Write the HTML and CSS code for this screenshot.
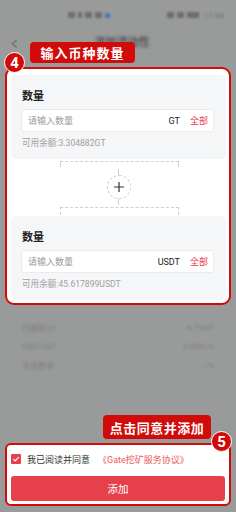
FILE: index.html
```html
<!DOCTYPE html>
<html lang="zh">
<head>
<meta charset="utf-8">
<title>添加流动性</title>
<link rel="stylesheet" href="styles.css">
</head>
<body>
<div class="screen">
  <div class="status">
    <span class="st-left"><i class="ic"></i><i class="ic sm"></i><i class="ic"></i><i class="ic"></i><i class="dot"></i></span>
    <span class="st-right"><i class="ic"></i><i class="ic"></i><i class="ic wide"></i><span class="time">11:43</span></span>
  </div>
  <div class="header">
    <span class="back">‹</span>
    <span class="title">添加流动性</span>
    <span></span>
  </div>

  <div class="card card-top">
    <div class="tag tag-1">输入币种数量</div>
    <div class="badge badge-4">4</div>

    <div class="panel">
      <div class="label">数量</div>
      <div class="field">
        <span class="ph">请输入数量</span>
        <span class="unit">GT</span>
        <span class="all">全部</span>
      </div>
      <div class="balance">可用余额:3.304882GT</div>
    </div>

    <div class="connector">
      <div class="bracket bracket-a"></div>
      <div class="vline"></div>
      <div class="plus">
        <svg width="12" height="12" viewBox="0 0 12 12"><path d="M6 1v10M1 6h10" stroke="#333" stroke-width="1.2" fill="none"/></svg>
      </div>
      <div class="vline"></div>
      <div class="bracket bracket-b"></div>
    </div>

    <div class="panel">
      <div class="label">数量</div>
      <div class="field">
        <span class="ph">请输入数量</span>
        <span class="unit">USDT</span>
        <span class="all">全部</span>
      </div>
      <div class="balance">可用余额:45.617899USDT</div>
    </div>
  </div>

  <div class="info">
    <div class="row"><span>已赚取GT</span><span>4.7%GT</span></div>
    <div class="row"><span>USDT/GT</span><span>0.0891%</span></div>
    <div class="row"><span>手续费率</span><span>--%</span></div>
  </div>

  <div class="card card-bottom">
    <div class="tag tag-2">点击同意并添加</div>
    <div class="badge badge-5">5</div>
    <div class="agree">
      <span class="check">
        <svg width="8" height="8" viewBox="0 0 8 8"><path d="M1.3 4.1 3.2 5.9 6.8 2.2" stroke="#fff" stroke-width="1.2" fill="none"/></svg>
      </span>
      <span class="agree-text">我已阅读并同意</span>
      <span class="agree-link">《Gate挖矿服务协议》</span>
    </div>
    <button class="submit">添加</button>
  </div>
</div>
</body>
</html>
```

FILE: styles.css
```css
* { box-sizing: border-box; }
html, body { margin: 0; padding: 0; }
body {
  background: #999a9a;
  font-family: Roboto, "Noto Sans CJK SC", sans-serif;
  width: 236px;
  height: 512px;
  overflow: hidden;
}
.screen { display: flex; flex-direction: column; }

.status {
  height: 30px;
  display: flex;
  align-items: center;
  justify-content: space-between;
  padding: 0 12px 0 68px;
  filter: blur(1px);
}
.st-left, .st-right { display: flex; align-items: center; gap: 3px; }
.ic { display: block; width: 7px; height: 6px; background: #6e6e6e; border-radius: 1px; }
.ic.sm { width: 4px; }
.ic.wide { width: 12px; }
.dot { display: block; width: 5px; height: 5px; background: #3b6fd0; border-radius: 50%; }
.time { font-size: 8px; color: #6e6e6e; margin-left: 2px; }

.header {
  height: 37px;
  display: grid;
  grid-template-columns: 1fr auto 1fr;
  align-items: start;
  padding: 4px 10px 0;
}
.back { font-size: 22px; line-height: 18px; color: #777; filter: blur(0.6px); font-family: "DejaVu Sans", sans-serif; }
.title { font-size: 11px; line-height: 18px; color: #555; filter: blur(1.4px); font-weight: 600; padding-left: 8px; }

.card {
  position: relative;
  margin: 0 5px;
  background: #fff;
  border: 2px solid #d10a0a;
  border-radius: 9px;
}
.card-top { padding: 6px 3px 3px 4px; }

.tag {
  position: absolute;
  background: #d10a0a;
  color: #fff;
  font-family: "Noto Sans CJK SC", sans-serif;
  font-weight: 700;
  border-radius: 4px;
  display: flex;
  align-items: center;
  justify-content: center;
  letter-spacing: 1px;
}
.tag-1 { left: 23px; top: -27px; width: 105px; height: 21px; font-size: 13px; }
.tag-2 { left: 96px; top: -30px; width: 108px; height: 24px; font-size: 13px; letter-spacing: 0.5px; }

.badge {
  position: absolute;
  width: 21px;
  height: 21px;
  border-radius: 50%;
  background: #d10a0a;
  border: 1.5px solid #fff;
  color: #fff;
  font-family: Roboto, sans-serif;
  font-weight: 700;
  font-size: 15px;
  display: flex;
  align-items: center;
  justify-content: center;
}
.badge-4 { left: -3px; top: -17px; }
.badge-5 { right: -3px; top: -14px; }

.panel {
  background: #f5f6f8;
  border-radius: 5px;
  padding: 13px 12px 10px 10px;
  display: flex;
  flex-direction: column;
}
.label {
  font-family: "Noto Sans CJK SC", sans-serif;
  font-size: 11px;
  line-height: 14px;
  font-weight: 600;
  color: #222;
  padding-left: 1px;
}
.field {
  margin-top: 7px;
  height: 23px;
  background: #fff;
  border: 1px solid #ebebeb;
  border-radius: 3px;
  display: flex;
  align-items: center;
  padding: 0 5px 0 6px;
  font-size: 9px;
}
.ph { flex: 1; color: #9b9b9b; }
.unit { color: #222; margin-right: 10px; }
.all { color: #e8404a; }
.balance {
  margin-top: 5px;
  font-size: 8.6px;
  line-height: 12px;
  color: #a0a0a0;
  padding-left: 1px;
}

.connector {
  display: flex;
  flex-direction: column;
  align-items: center;
  padding: 2px 0 1px;
}
.bracket {
  width: 119px;
  height: 6px;
  border: 1px dashed #cfcfcf;
  border-bottom: none;
  margin-left: 1px;
}
.bracket-a { margin-bottom: 2px; }
.bracket-b { height: 8px; margin-top: 2px; }
.vline { width: 0; height: 6px; border-left: 1px dashed #cfcfcf; }
.plus {
  width: 24px;
  height: 24px;
  border: 1px dashed #cfcfcf;
  border-radius: 50%;
  display: flex;
  align-items: center;
  justify-content: center;
}

.info {
  height: 138px;
  padding: 13px 22px 0;
  filter: blur(1.3px);
}
.row {
  height: 19px;
  display: flex;
  align-items: center;
  justify-content: space-between;
  font-size: 8px;
  color: #7d7d7d;
}

.card-bottom {
  border-radius: 6px;
  padding: 7px 4px 3px 4px;
  display: flex;
  flex-direction: column;
  gap: 10px;
}
.agree {
  height: 14px;
  display: flex;
  align-items: center;
  font-size: 9px;
  font-family: "Noto Sans CJK SC", sans-serif;
}
.check {
  width: 10px;
  height: 10px;
  background: #e8404a;
  border-radius: 1px;
  display: flex;
  align-items: center;
  justify-content: center;
  margin-right: 6px;
}
.agree-text { color: #333; }
.agree-link { color: #ea5a62; margin-left: 8px; font-family: Roboto, "Noto Sans CJK SC", sans-serif; }
.submit {
  height: 25px;
  border: none;
  border-radius: 3px;
  background: #e6404a;
  color: #fff;
  font-family: "Noto Sans CJK SC", sans-serif;
  font-size: 10.5px;
  padding: 0;
}
```
